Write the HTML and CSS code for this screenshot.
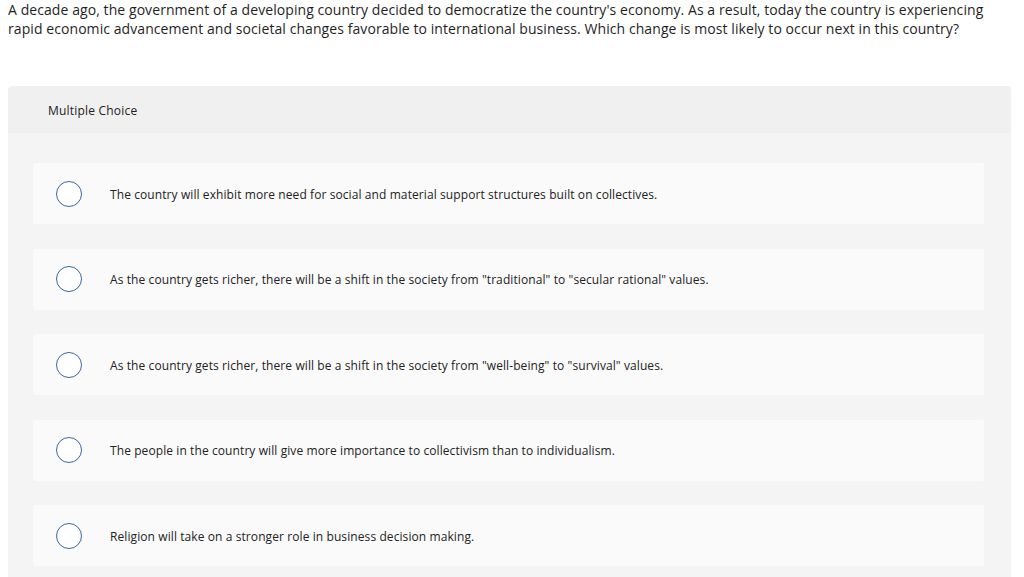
FILE: index.html
```html
<!DOCTYPE html>
<html>
<head>
<meta charset="utf-8">
<link rel="stylesheet" href="styles.css">
</head>
<body>
<p class="question">A decade ago, the government of a developing country decided to democratize the country's economy. As a result, today the country is experiencing rapid economic advancement and societal changes favorable to international business. Which change is most likely to occur next in this country?</p>
<div class="panel">
  <div class="panel-head">Multiple Choice</div>
  <div class="panel-body">
    <div class="option"><span class="radio"></span><span class="label">The country will exhibit more need for social and material support structures built on collectives.</span></div>
    <div class="option"><span class="radio"></span><span class="label">As the country gets richer, there will be a shift in the society from "traditional" to "secular rational" values.</span></div>
    <div class="option"><span class="radio"></span><span class="label">As the country gets richer, there will be a shift in the society from "well-being" to "survival" values.</span></div>
    <div class="option"><span class="radio"></span><span class="label">The people in the country will give more importance to collectivism than to individualism.</span></div>
    <div class="option"><span class="radio"></span><span class="label">Religion will take on a stronger role in business decision making.</span></div>
  </div>
</div>
</body>
</html>
```

FILE: styles.css
```css
html, body { margin: 0; padding: 0; background: #fff; }
body {
  font-family: "Open Sans", "Lato", sans-serif;
  color: #222;
  padding: 0 8px;
}
.question {
  margin: 0;
  font-size: 14px;
  letter-spacing: 0.075px;
  line-height: 19px;
  width: 990px;
  color: #1f1f1f;
}
.panel {
  margin-top: 48px;
  width: 1003px;
  border-radius: 4px 4px 0 0;
  overflow: hidden;
}
.panel-head {
  background: #f0f0f0;
  height: 47px;
  display: flex;
  align-items: center;
  padding-left: 40px;
  padding-top: 1px;
  box-sizing: border-box;
  font-size: 12px;
  letter-spacing: 0.2px;
  color: #222;
}
.panel-body {
  background: #f4f4f4;
  padding: 30px 27px 11px 25px;
  display: flex;
  flex-direction: column;
  gap: 24.5px;
}
.option {
  background: #fafafa;
  height: 61px;
  border-radius: 3px;
  display: flex;
  align-items: center;
  padding-left: 23px;
}
.radio {
  width: 24px;
  height: 24px;
  border: 1.5px solid #3b65a0;
  border-radius: 50%;
  background: #fff;
  flex: none;
}
.label {
  margin-left: 28px;
  padding-top: 1px;
  font-size: 12px;
  letter-spacing: 0.09px;
  color: #222;
}
```
